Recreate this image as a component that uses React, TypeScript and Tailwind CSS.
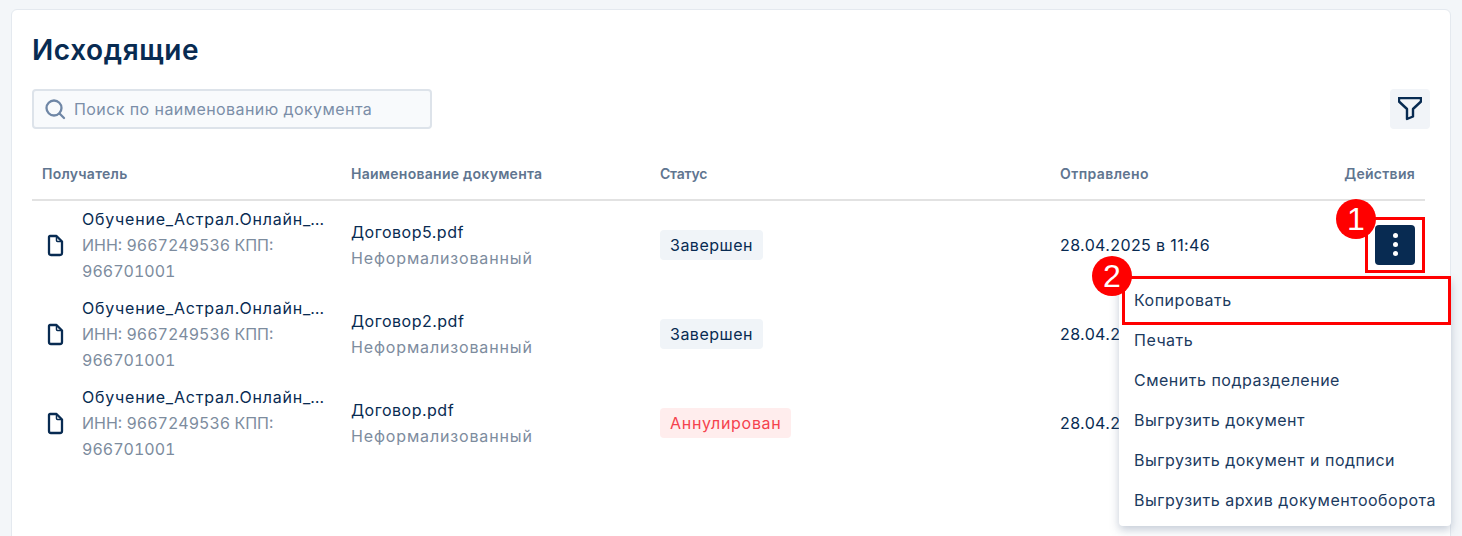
const rows = [
  { name: "Договор5.pdf", status: "Завершен", bad: false },
  { name: "Договор2.pdf", status: "Завершен", bad: false },
  { name: "Договор.pdf", status: "Аннулирован", bad: true },
];
const menu = ["Копировать", "Печать", "Сменить подразделение", "Выгрузить документ", "Выгрузить документ и подписи", "Выгрузить архив документооборота"];
const cols = "grid grid-cols-[309px_309px_400px_1fr]";

function DocIcon() {
  return (
    <svg width="24" height="24" viewBox="0 0 24 24" fill="none" stroke="#082b52" strokeWidth="2.300" strokeLinejoin="round" className="shrink-0">
      <path d="M8 3h6.500L20 8.500V20a2 2 0 0 1-2 2H9a2 2 0 0 1-2-2V4a1 1 0 0 1 1-1z" />
      <path d="M14.500 4v3.500a1 1 0 0 0 1 1H19" strokeWidth="1.500" />
    </svg>
  );
}

export default function App() {
  return (
    <div className="relative h-[536px] overflow-hidden bg-[#f3f6f9] pt-[9px] pl-[11px] pr-[11px] font-['Inter',sans-serif] tracking-[0.5px]">
      <div className="h-[540px] rounded-md border border-[#e4e9ef] bg-white pl-[20px] pr-[25px]">
        <h1 className="mt-[20px] text-[28px] leading-[40px] font-semibold tracking-[0.6px] text-[#082b52]">Исходящие</h1>
        <div className="mt-[19px] mr-[-5px] flex items-center justify-between">
          <div className="flex h-10 w-[400px] items-center gap-[7px] rounded border-2 border-[#dde3ea] bg-[#f8fafc] pl-[9px]">
            <svg width="24" height="24" viewBox="0 0 24 24" fill="none" stroke="#6f87a6" strokeWidth="2.300" strokeLinecap="round">
              <circle cx="11" cy="11" r="7.500" />
              <path d="M16.500 16.500 21 21" />
            </svg>
            <span className="text-base tracking-[0.42px] text-[#7b8ea8]">Поиск по наименованию документа</span>
          </div>
          <div className="flex h-10 w-10 items-center justify-center rounded bg-[#f1f4f8]">
            <svg width="24" height="24" viewBox="0 0 24 24" fill="none" stroke="#082b52" strokeWidth="2.400" strokeLinejoin="round">
              <path d="M1 1h22v3.500l-8 7.500v7.500L9 22V12L1 4.500z" />
            </svg>
          </div>
        </div>
        <div className={`${cols} mt-[20px] h-[52px] items-center border-b-2 border-[#e2e2e2] text-sm font-semibold tracking-[0.27px] text-[#5f7590]`}>
          <div className="pl-[10px]">Получатель</div>
          <div className="pl-[10px]">Наименование документа</div>
          <div className="pl-[10px] tracking-[-0.2px]">Статус</div>
          <div className="flex justify-between px-[10px]"><span className="tracking-[0.4px]">Отправлено</span><span>Действия</span></div>
        </div>
        {rows.map((r, i) => (
          <div key={i} className={`${cols} h-[89px] items-center`}>
            <div className="flex items-center gap-[16px] pl-[10px] pr-[15px] pb-[2px]">
              <DocIcon />
              <div className="min-w-0 text-base leading-[26px]">
                <div className="truncate tracking-[0.8px] text-[#082b52]">Обучение_Астрал.Онлайн_Тестовая организация</div>
                <div className="tracking-[0px] text-[#7d8c9e] tabular-nums">ИНН: 9667249536 КПП: 966701001</div>
              </div>
            </div>
            <div className="pl-[10px] pb-[2px] text-base leading-[26px]">
              <div className="text-[#082b52]">{r.name}</div>
              <div className="tracking-[0.85px] text-[#7d8c9e]">Неформализованный</div>
            </div>
            <div className="pl-[10px] pb-[2px]">
              <span className={`inline-block h-[30px] rounded px-[10px] align-top text-base leading-[30px] ${r.bad ? "bg-[#ffeded] tracking-[0.7px] text-[#f5424d]" : "bg-[#f0f4f8] text-[#082b52]"}`}>{r.status}</span>
            </div>
            <div className="flex items-center justify-between px-[10px] pb-[2px]">
              <span className="text-base tracking-[0.38px] text-[#082b52]">28.04.2025 в 11:46</span>
              {i === 0 && (
                <div className="flex h-10 w-10 flex-col items-center justify-center gap-[4px] rounded bg-[#082b52]">
                  <span className="h-[5px] w-[5px] rounded-full bg-white" />
                  <span className="h-[5px] w-[5px] rounded-full bg-white" />
                  <span className="h-[5px] w-[5px] rounded-full bg-white" />
                </div>
              )}
            </div>
          </div>
        ))}
      </div>

      <div className="absolute left-[1119px] top-[277px] w-[332px] rounded bg-white pt-[3px] pb-[6px] shadow-[0_4px_10px_rgba(90,110,140,0.35)]">
        {menu.map((m) => (
          <div key={m} className="flex h-10 items-center pl-[15px] text-base whitespace-nowrap text-[#1b3a60]">{m}</div>
        ))}
      </div>

      <div className="absolute left-[1365px] top-[217px] h-[56px] w-[60px] border-[3px] border-[#f00]" />
      <div className="absolute left-[1122px] top-[276px] h-[49px] w-[329px] border-[3px] border-[#f00]" />
      <div className="absolute left-[1336px] top-[199px] flex h-10 w-10 items-center justify-center rounded-full bg-[#f00] font-['Liberation_Sans',sans-serif] text-[32px] leading-none tracking-normal text-white">1</div>
      <div className="absolute left-[1092px] top-[256px] flex h-10 w-10 items-center justify-center rounded-full bg-[#f00] font-['Liberation_Sans',sans-serif] text-[32px] leading-none tracking-normal text-white">2</div>
    </div>
  );
}
